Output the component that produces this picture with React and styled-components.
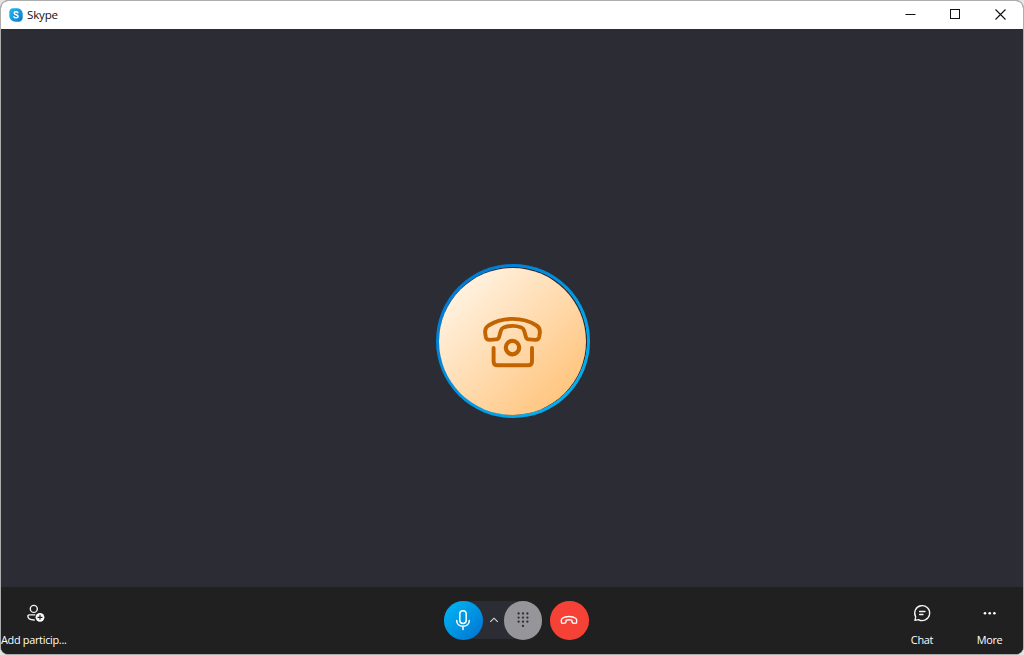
import React from "react";
import styled, { createGlobalStyle } from "styled-components";

const GlobalStyle = createGlobalStyle`
  * { box-sizing: border-box; }
  body {
    margin: 0;
    background: #e4e4e4;
    font-family: "Open Sans", "Noto Sans", sans-serif;
    overflow: hidden;
  }
  svg { display: block; }
  button { border: 0; padding: 0; background: none; font: inherit; color: inherit; }
`;

const Window = styled.div`
  display: flex;
  flex-direction: column;
  width: 1024px;
  height: 655px;
  border: 1px solid #adadad;
  border-radius: 8px;
  overflow: hidden;
  background: #202020;
`;

const TitleBar = styled.header`
  display: flex;
  align-items: center;
  justify-content: space-between;
  height: 28px;
  flex: none;
  background: #fff;
`;

const Brand = styled.div`
  display: flex;
  align-items: center;
  gap: 4px;
  padding-left: 8px;
`;

const BrandName = styled.span`
  font-size: 11.6px;
  line-height: 16px;
  letter-spacing: -0.2px;
  color: #111;
`;

const WindowControls = styled.div`
  display: flex;
`;

const ControlButton = styled.button`
  display: grid;
  place-items: center;
  width: 45px;
  height: 28px;
  padding-bottom: 1px;
  color: #111;
`;

const Stage = styled.main`
  display: flex;
  flex: none;
  justify-content: center;
  height: 558px;
  padding-top: 235px;
  background: #2b2c34;
`;

const Ring = styled.div`
  display: grid;
  place-items: center;
  width: 154px;
  height: 154px;
  margin-left: 1px;
  border-radius: 50%;
  background: radial-gradient(circle, #2b2c34 73.6px, transparent 74.2px),
    linear-gradient(135deg, #0078d4 10%, #00b0f0 85%);
`;

const Avatar = styled.div`
  display: grid;
  place-items: center;
  width: 147px;
  height: 147px;
  border-radius: 50%;
  background: linear-gradient(135deg, #fff4e5 10%, #ffc47c 88%);
`;

const Toolbar = styled.footer`
  display: grid;
  grid-template-columns: 1fr auto 1fr;
  flex: 1;
  background: #202020;
`;

const ToolGroup = styled.div`
  display: flex;
  justify-content: ${(p) => (p.$end ? "flex-end" : "flex-start")};
`;

const ToolButton = styled.button`
  display: flex;
  flex-direction: column;
  align-items: center;
  gap: 9px;
  width: ${(p) => p.$width || "68px"};
  padding-top: 16px;
  color: #fff;
`;

const ToolLabel = styled.span`
  width: 100%;
  font-size: 10.9px;
  line-height: 16px;
  letter-spacing: -0.3px;
  text-align: ${(p) => p.$align || "center"};
  white-space: nowrap;
`;

const CallControls = styled.div`
  display: flex;
  gap: 8px;
  height: 38px;
  margin: 14px 0 0 8.5px;
`;

const AudioControls = styled.div`
  display: flex;
  border-radius: 19px;
  background: #2b2c34;
`;

const RoundButton = styled.button`
  display: grid;
  place-items: center;
  width: 38.5px;
  height: 38.5px;
  border-radius: 50%;
  background: ${(p) => p.$fill};
`;

const ExpandButton = styled.button`
  display: grid;
  place-items: center;
  width: 21px;
  padding-left: 1px;
`;

const SkypeLogo = () => (
  <svg width="14" height="14" viewBox="0 0 14 14">
    <defs>
      <linearGradient id="brand" x1="0" y1="0" x2="1" y2="1">
        <stop offset="0" stopColor="#27b9ef" />
        <stop offset="1" stopColor="#0878cf" />
      </linearGradient>
    </defs>
    <path
      d="M4 .2H8.500C11.500.4 13.500 2.700 13.700 5.500V9.700C13.700 12 12 13.700 9.700 13.700H6.500C2.800 13.500.500 11.300.300 7.800V3.900C.3 1.800 1.900.2 4 .2Z"
      fill="url(#brand)"
    />
    <path
      d="M8.900 4.700C8.200 3.500 5.200 3.500 5.200 5.200c0 2 3.900 1.200 3.900 3.200 0 1.800-3.400 1.800-4.200.4"
      fill="none"
      stroke="#fff"
      strokeWidth="1.500"
      strokeLinecap="round"
    />
  </svg>
);

const TelephoneIcon = () => (
  <svg width="74" height="70" viewBox="0 0 74 70" fill="none" stroke="#c26400" strokeWidth="3.900" strokeLinejoin="round" strokeLinecap="round">
    <path d="M12.500 19.500C26 10.700 47 10.700 60.500 19.500C63.500 21.500 64.200 24 63.800 27L63.300 30.500Q62.700 34 59.500 33.900L53 33.400Q50.500 33.200 49.900 31L48.100 24.500Q47.500 22.300 45.400 21.500Q36.500 18.300 27.600 21.500Q25.500 22.300 24.900 24.500L23.100 31Q22.500 33.200 20 33.400L13.500 33.900Q10.300 34 9.700 30.500L9.200 27C8.800 24 9.500 21.500 12.500 19.500Z" />
    <path d="M17.600 42V55.500Q17.600 59.300 21.400 59.300H52.200Q56 59.300 56 55.500V42" />
    <circle cx="36.500" cy="41.600" r="6.700" strokeWidth="4.200" />
  </svg>
);

const AddPersonIcon = () => (
  <svg width="20" height="20" viewBox="0 0 20 20" fill="none" stroke="#f4f4f4" strokeWidth="1.400">
    <circle cx="8.800" cy="5.900" r="3.500" />
    <path d="M9.800 11.900H4.200Q2.900 11.900 2.900 13.100C2.900 15.700 5.200 17 9.300 17" strokeLinecap="round" />
    <circle cx="15" cy="14.300" r="4.400" fill="#fff" stroke="none" />
    <path d="M15 11.800V16.800M12.500 14.300H17.500" stroke="#202020" strokeWidth="1.200" />
  </svg>
);

const ChatIcon = () => (
  <svg width="20" height="20" viewBox="0 0 20 20" fill="none" stroke="#f4f4f4" strokeWidth="1.300" strokeLinecap="round" strokeLinejoin="round">
    <path d="M6.400 16.600L2.900 17.400L3.700 13.900A7.500 7.500 0 1 1 6.400 16.600Z" />
    <path d="M7.600 8.500H13M7.600 11.500H11" />
  </svg>
);

const MoreIcon = () => (
  <svg width="20" height="20" viewBox="0 0 20 20" fill="#fff">
    <circle cx="5" cy="10.300" r="1.300" />
    <circle cx="9.700" cy="10.300" r="1.300" />
    <circle cx="14.400" cy="10.300" r="1.300" />
  </svg>
);

const MicIcon = () => (
  <svg width="20" height="22" viewBox="0 0 20 22" fill="none" stroke="#fff" strokeWidth="1.500" strokeLinecap="round">
    <rect x="6.800" y="1.800" width="6.400" height="12.700" rx="3.200" />
    <path d="M3.700 11.500C3.700 15.200 6.400 17.300 10 17.300S16.300 15.200 16.300 11.500M10 17.300V20.400" />
  </svg>
);

const DialpadIcon = () => (
  <svg width="14" height="18" viewBox="0 0 14 18" fill="#2f2f35">
    {[2.5, 6.6, 10.7].map((y) =>
      [2.6, 7, 11.4].map((x) => <circle key={`${x}-${y}`} cx={x} cy={y} r="1.150" />)
    )}
    <circle cx="7" cy="14.900" r="1.150" />
  </svg>
);

const HangUpIcon = () => (
  <svg width="20" height="12" viewBox="0 0 20 12" fill="none" stroke="#fff" strokeWidth="1.400" strokeLinejoin="round">
    <path d="M3.300 4.200C6.500 1.900 13.500 1.900 16.700 4.200Q18.200 5.400 17.600 8.300Q17.300 9.500 16.300 9.400L13.900 9Q13.200 8.800 13.100 8.100L12.800 6.200Q10 5.200 7.200 6.200L6.900 8.100Q6.800 8.800 6.100 9L3.700 9.400Q2.700 9.500 2.400 8.300Q1.800 5.400 3.300 4.200Z" />
  </svg>
);

export default function App() {
  return (
    <>
      <GlobalStyle />
      <Window>
        <TitleBar>
          <Brand>
            <SkypeLogo />
            <BrandName>Skype</BrandName>
          </Brand>
          <WindowControls>
            <ControlButton aria-label="Minimize">
              <svg width="11" height="11" viewBox="0 0 11 11"><path d="M.5 5.500H10.500" stroke="currentColor" /></svg>
            </ControlButton>
            <ControlButton aria-label="Maximize">
              <svg width="11" height="11" viewBox="0 0 11 11"><rect x=".5" y=".5" width="9" height="9" fill="none" stroke="currentColor" /></svg>
            </ControlButton>
            <ControlButton aria-label="Close">
              <svg width="11" height="11" viewBox="0 0 11 11"><path d="M.5.5 10.500 10.500M10.500.5.500 10.500" stroke="currentColor" strokeWidth="1.100" /></svg>
            </ControlButton>
          </WindowControls>
        </TitleBar>
        <Stage>
          <Ring>
            <Avatar>
              <TelephoneIcon />
            </Avatar>
          </Ring>
        </Stage>
        <Toolbar>
          <ToolGroup>
            <ToolButton>
              <AddPersonIcon />
              <ToolLabel $align="left">Add particip...</ToolLabel>
            </ToolButton>
          </ToolGroup>
          <CallControls>
            <AudioControls>
              <RoundButton aria-label="Mute" $fill="linear-gradient(135deg, #00b2f2 10%, #0078d4 90%)">
                <MicIcon />
              </RoundButton>
              <ExpandButton aria-label="Audio options">
                <svg width="10" height="6" viewBox="0 0 10 6"><path d="M1.300 4.800 5 1.200 8.700 4.800" fill="none" stroke="#ddd" strokeWidth="1.100" /></svg>
              </ExpandButton>
              <RoundButton aria-label="Dial pad" $fill="#95959a">
                <DialpadIcon />
              </RoundButton>
            </AudioControls>
            <RoundButton aria-label="End call" $fill="#f64236">
              <HangUpIcon />
            </RoundButton>
          </CallControls>
          <ToolGroup $end>
            <ToolButton>
              <ChatIcon />
              <ToolLabel>Chat</ToolLabel>
            </ToolButton>
            <ToolButton $width="67px">
              <MoreIcon />
              <ToolLabel>More</ToolLabel>
            </ToolButton>
          </ToolGroup>
        </Toolbar>
      </Window>
    </>
  );
}
